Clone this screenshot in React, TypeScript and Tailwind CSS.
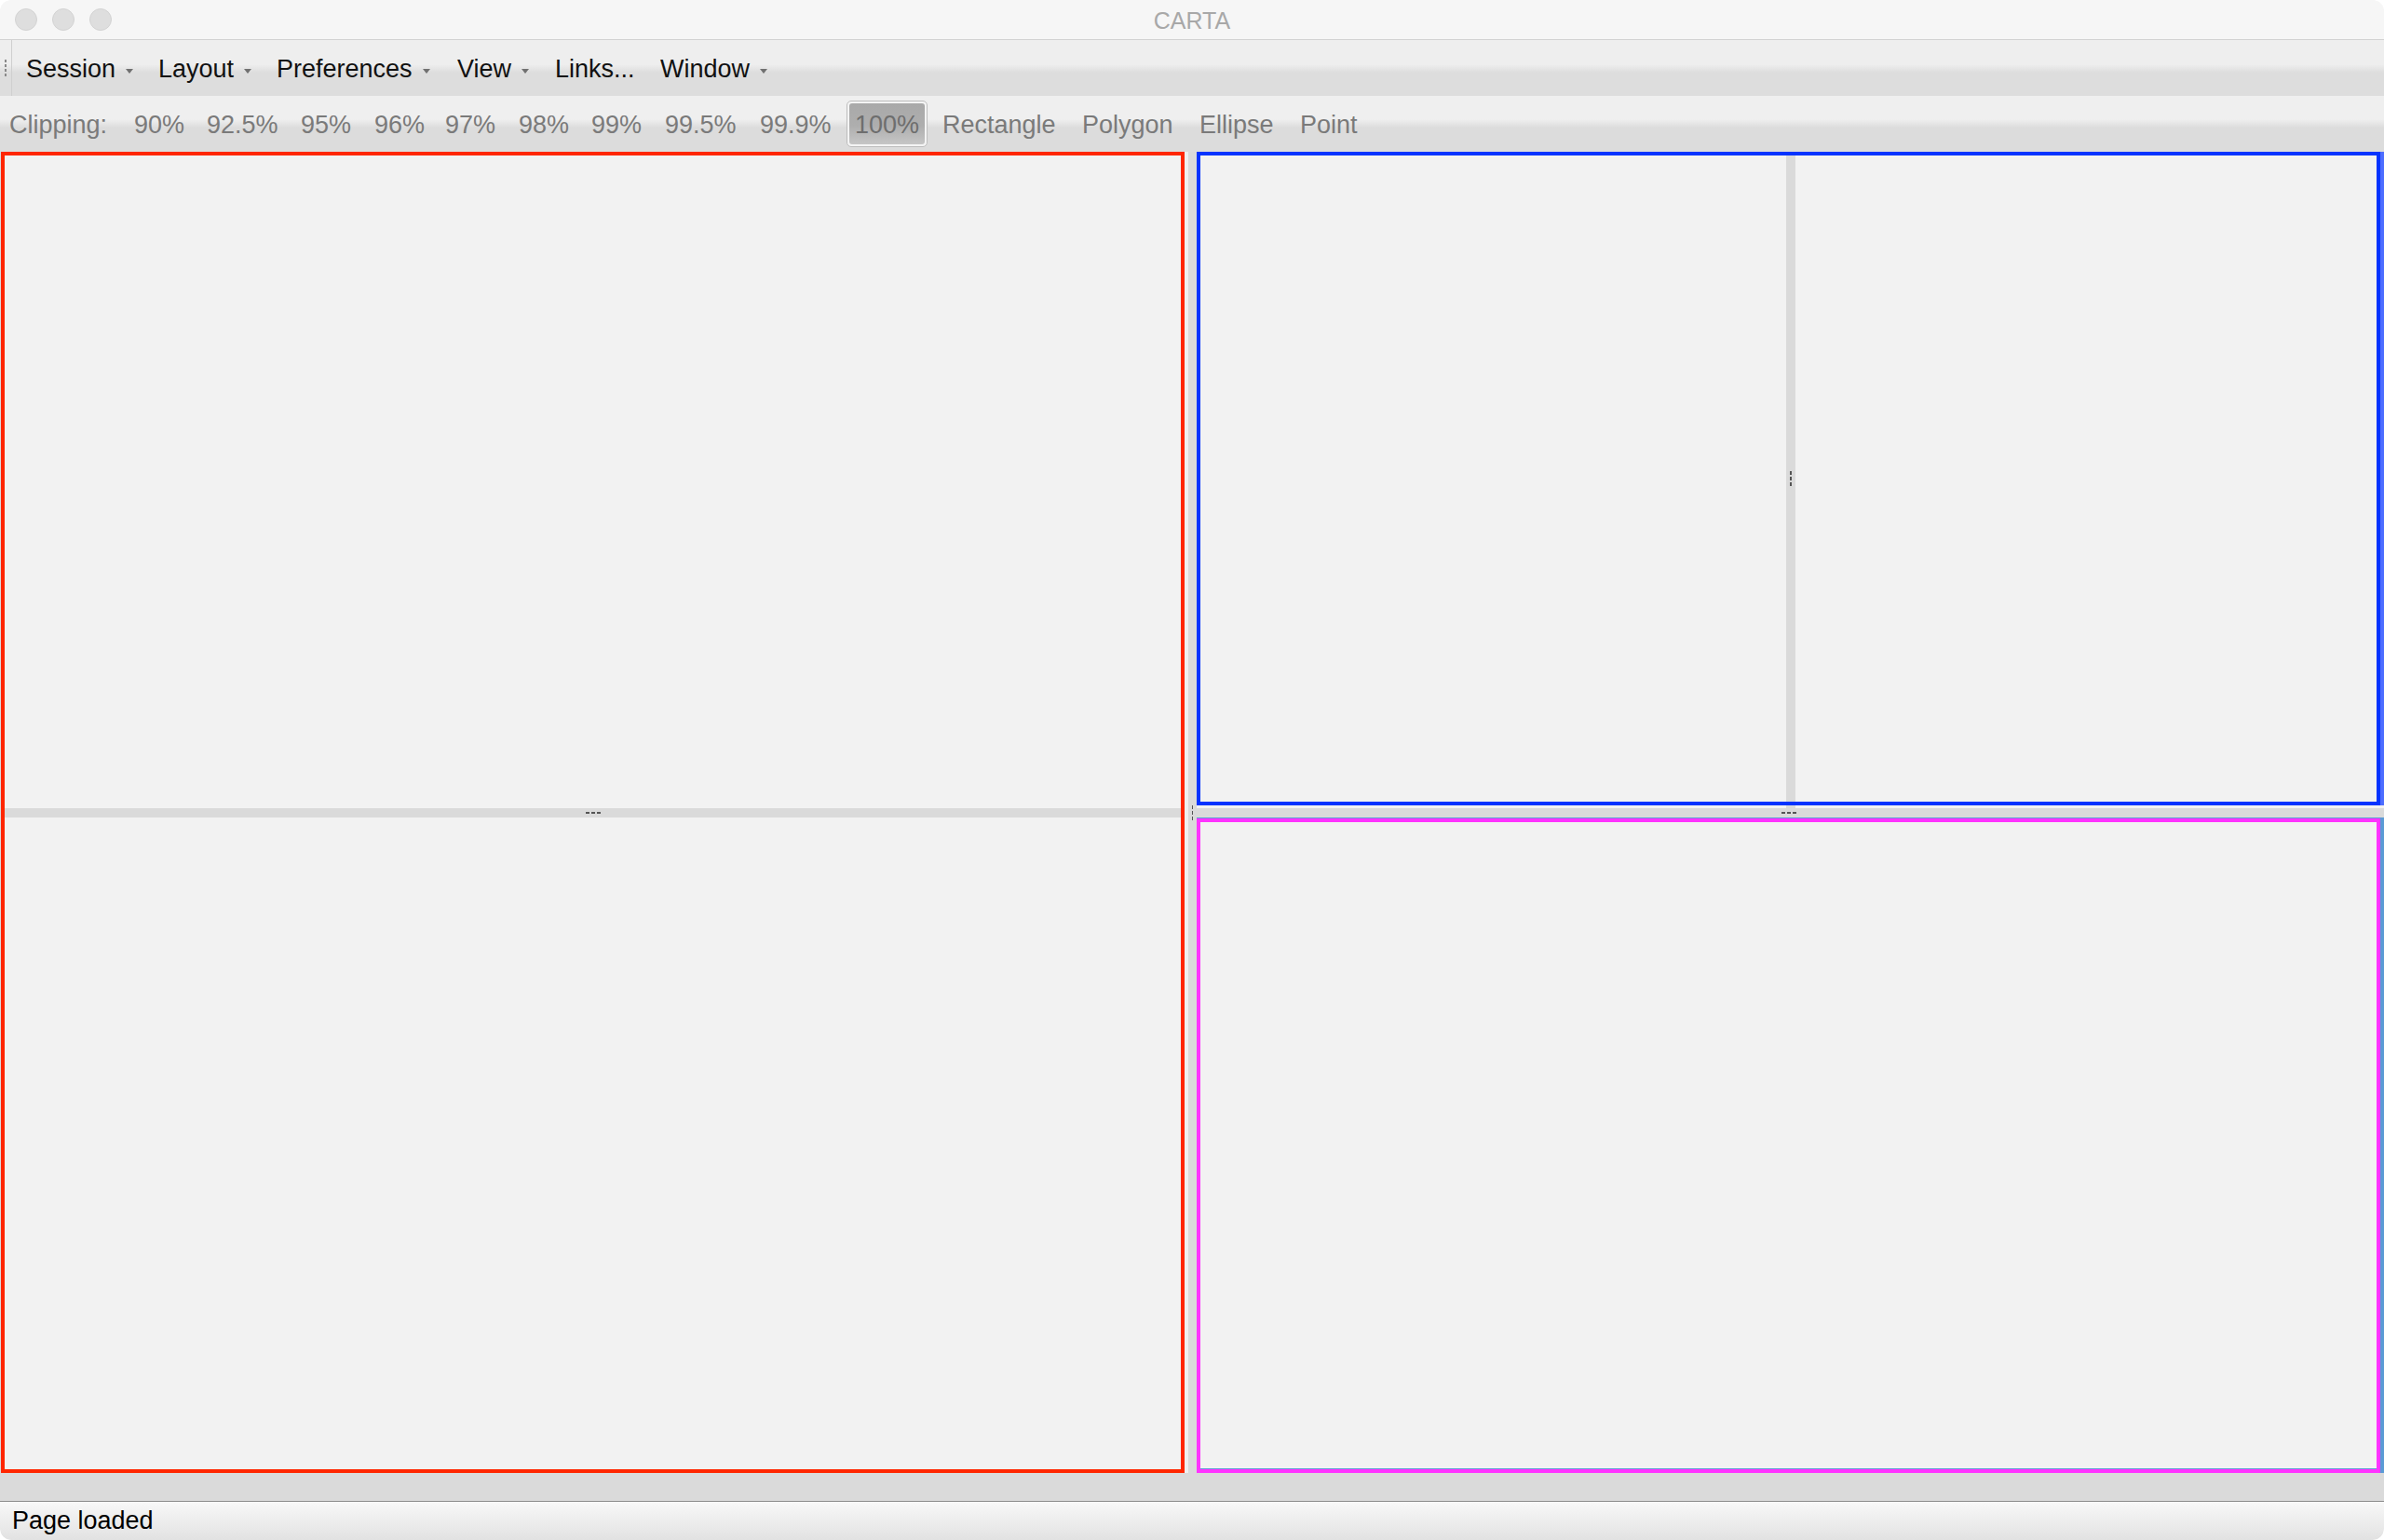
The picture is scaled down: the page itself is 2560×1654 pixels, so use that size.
import React from "react";

const Tri = () => (
  <svg width="8" height="5" viewBox="0 0 8 5" className="ml-[11px] mt-[3px] shrink-0">
    <polygon points="0,0 8,0 4,5" fill="#707070" />
  </svg>
);

const HDots = () => (
  <div className="flex gap-[2px]">
    <div className="w-[4px] h-[2px] bg-[#555555]" />
    <div className="w-[4px] h-[2px] bg-[#555555]" />
    <div className="w-[4px] h-[2px] bg-[#555555]" />
  </div>
);

const VDots = ({ w = "w-[2px]" }: { w?: string }) => (
  <div className="flex flex-col gap-[2px]">
    <div className={`${w} h-[4px] bg-[#555555]`} />
    <div className={`${w} h-[4px] bg-[#555555]`} />
    <div className={`${w} h-[4px] bg-[#555555]`} />
  </div>
);

const menu: { label: string; w: string; tri: boolean }[] = [
  { label: "Session", w: "w-[142px]", tri: true },
  { label: "Layout", w: "w-[127px]", tri: true },
  { label: "Preferences", w: "w-[194px]", tri: true },
  { label: "View", w: "w-[105px]", tri: true },
  { label: "Links...", w: "w-[113px]", tri: false },
  { label: "Window", w: "w-[140px]", tri: true },
];

const tools: { label: string; w: string }[] = [
  { label: "Clipping:", w: "w-[134px]" },
  { label: "90%", w: "w-[78px]" },
  { label: "92.5%", w: "w-[101px]" },
  { label: "95%", w: "w-[79px]" },
  { label: "96%", w: "w-[76px]" },
  { label: "97%", w: "w-[79px]" },
  { label: "98%", w: "w-[78px]" },
  { label: "99%", w: "w-[79px]" },
  { label: "99.5%", w: "w-[102px]" },
  { label: "99.9%", w: "w-[93px]" },
];

const shapes: { label: string; w: string }[] = [
  { label: "Rectangle", w: "w-[150px]" },
  { label: "Polygon", w: "w-[126px]" },
  { label: "Ellipse", w: "w-[108px]" },
  { label: "Point", w: "w-[100px]" },
];

export default function App() {
  return (
    <div className="w-[2560px] h-[1654px] bg-white overflow-hidden font-['Liberation_Sans',Arial,sans-serif]">
      <div className="flex flex-col w-full h-full rounded-[12px] overflow-hidden">
        {/* Title bar */}
        <div className="h-[43px] shrink-0 bg-[#f6f6f6] border-b border-[#d2d2d2] grid grid-cols-[1fr_auto_1fr] items-center">
          <div className="flex items-center gap-[16px] pl-[16px]">
            <div className="w-[24px] h-[24px] rounded-full bg-[#dedede] border border-[#d3d3d3]" />
            <div className="w-[24px] h-[24px] rounded-full bg-[#dedede] border border-[#d3d3d3]" />
            <div className="w-[24px] h-[24px] rounded-full bg-[#dedede] border border-[#d3d3d3]" />
          </div>
          <div className="text-[25px] leading-none text-[#a8a8a8] pt-[2px]">CARTA</div>
          <div />
        </div>

        {/* Menu bar */}
        <div className="h-[60px] shrink-0 flex items-stretch bg-[linear-gradient(to_bottom,#eeeeee_0%,#eeeeee_44%,#dddddd_58%,#dddddd_100%)]">
          <div className="w-[13px] shrink-0 border-r border-[#cfcfcf] flex items-center pl-[5px]">
            <div className="flex flex-col gap-[2px]">
              <div className="w-[2px] h-[3px] bg-[#8a8a8a]" />
              <div className="w-[2px] h-[3px] bg-[#8a8a8a]" />
              <div className="w-[2px] h-[3px] bg-[#8a8a8a]" />
              <div className="w-[2px] h-[3px] bg-[#8a8a8a]" />
            </div>
          </div>
          <div className="flex items-center pl-[15px] pt-[3px]">
            {menu.map((m) => (
              <div key={m.label} className={`${m.w} shrink-0 flex items-center text-[27px] leading-none text-[#111111]`}>
                <span>{m.label}</span>
                {m.tri && <Tri />}
              </div>
            ))}
          </div>
        </div>

        {/* Toolbar */}
        <div className="h-[60px] shrink-0 flex items-center pl-[10px] bg-[linear-gradient(to_bottom,#efefef_0%,#efefef_42%,#dcdcdc_57%,#dcdcdc_100%)] text-[27px] leading-none text-[#7a7a7a]">
          {tools.map((t) => (
            <div key={t.label} className={`${t.w} shrink-0 pt-[3px]`}>
              {t.label}
            </div>
          ))}
          <div className="w-[87px] h-[50px] shrink-0 mr-[16px] rounded-[5px] border border-[#bdbdbd] bg-[#f4f4f4] p-[2px]">
            <div className="w-full h-full rounded-[3px] bg-[linear-gradient(to_bottom,#a9a9a9_0%,#aeaeae_55%,#c6c6c6_100%)] flex items-center justify-center text-[#6e6e6e] pt-[2px]">
              100%
            </div>
          </div>
          {shapes.map((s) => (
            <div key={s.label} className={`${s.w} shrink-0 pt-[3px]`}>
              {s.label}
            </div>
          ))}
        </div>

        {/* Main area */}
        <div className="h-[1419px] shrink-0 flex bg-[#dadada] pl-[1px]">
          {/* Left column (red) */}
          <div className="w-[1271px] h-full shrink-0 border-4 border-[#ff2600] flex flex-col bg-[#f2f2f2]">
            <div className="h-[701px] shrink-0 bg-[#f2f2f2]" />
            <div className="h-[10px] shrink-0 bg-[#dadada] flex items-center justify-center">
              <HDots />
            </div>
            <div className="flex-1 bg-[#f2f2f2]" />
          </div>
          <div className="w-[4px] shrink-0 bg-[#efefef]" />
          <div className="w-[9px] shrink-0 bg-[#dadada] flex items-center justify-center">
            <VDots w="w-[1px]" />
          </div>

          {/* Right column */}
          <div className="w-[1275px] shrink-0 flex flex-col">
            <div className="h-[702px] shrink-0 flex">
              <div className="w-[1271px] h-full shrink-0 border-4 border-[#0433ff] flex">
                <div className="w-[629px] shrink-0 bg-[#f2f2f2]" />
                <div className="w-[10px] shrink-0 bg-[#dadada] flex items-center justify-center">
                  <VDots />
                </div>
                <div className="flex-1 bg-[#f2f2f2]" />
              </div>
              <div className="w-[4px] shrink-0 bg-[#4d6dff]" />
            </div>
            <div className="h-[3px] shrink-0 flex">
              <div className="w-[633px] shrink-0 bg-[#f2f2f2]" />
              <div className="w-[10px] shrink-0 bg-[#dadada]" />
              <div className="flex-1 bg-[#f2f2f2]" />
            </div>
            <div className="h-[10px] shrink-0 bg-[#dadada] flex items-center justify-center pr-[4px]">
              <HDots />
            </div>
            <div className="h-[704px] shrink-0 flex flex-col border-t border-[#5b9bd5]">
              <div className="flex-1 flex">
                <div className="w-[1271px] h-full shrink-0 border-4 border-[#ff33ff] bg-[#f2f2f2] shadow-[inset_0_-1px_0_#5b9bd5]" />
                <div className="w-[4px] shrink-0 bg-[#5b9bd5]" />
              </div>
            </div>
          </div>
        </div>

        {/* Gap */}
        <div className="h-[30px] shrink-0 bg-[#dadada]" />

        {/* Status bar */}
        <div className="h-[42px] shrink-0 border-t border-[#8c8c8c] bg-[linear-gradient(to_bottom,#f8f8f8,#e2e2e2)] flex items-center pl-[13px] text-[27px] leading-none text-black rounded-b-[12px]">
          Page loaded
        </div>
      </div>
    </div>
  );
}
